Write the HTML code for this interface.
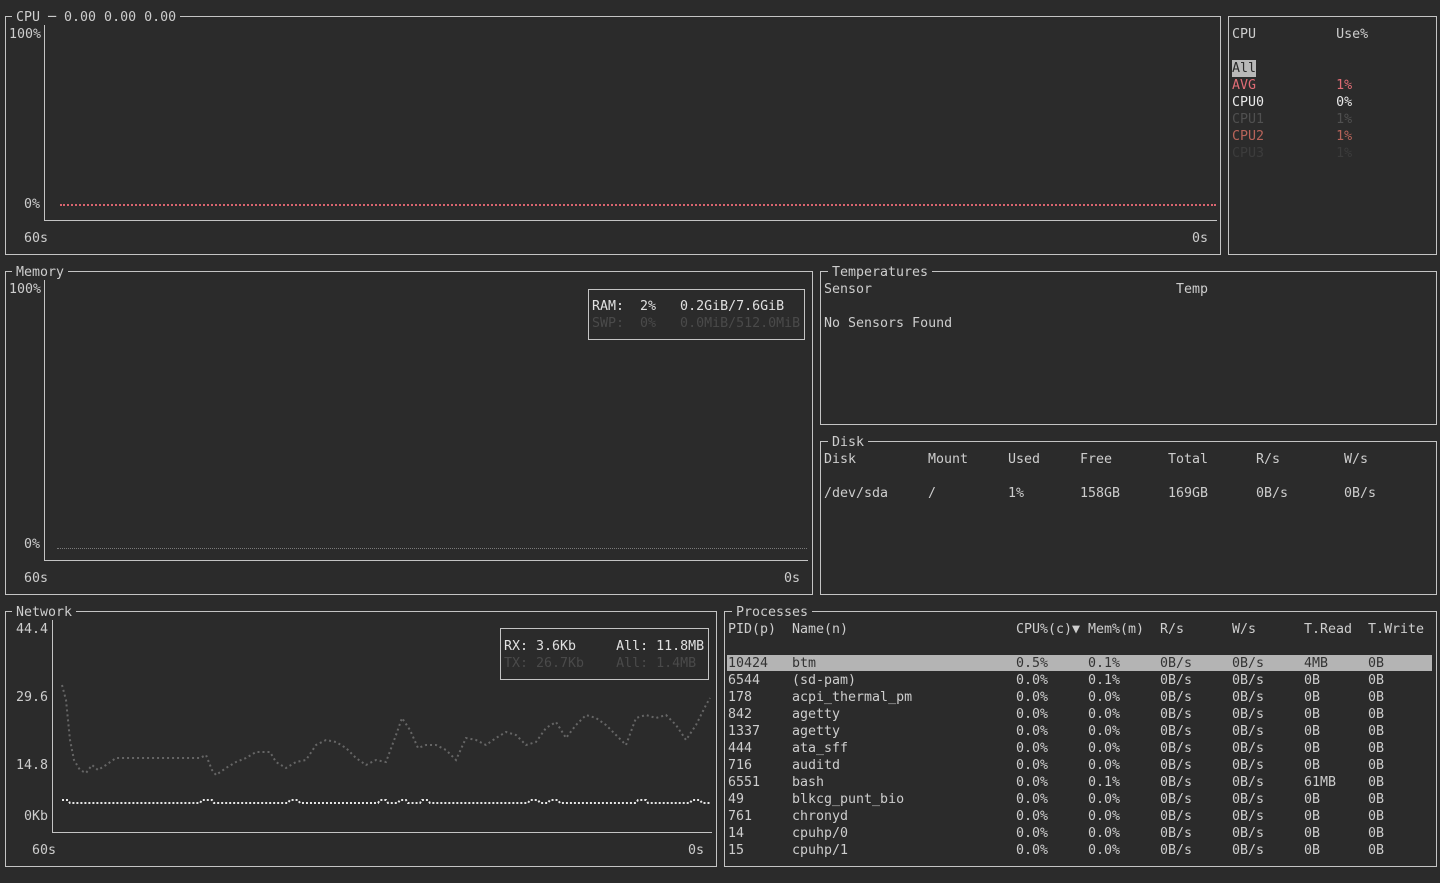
<!DOCTYPE html>
<html><head><meta charset="utf-8"><style>
html,body{margin:0;padding:0;background:#2b2b2b;width:1440px;height:883px;overflow:hidden}
body{position:relative;font-family:"DejaVu Sans Mono","Liberation Mono",monospace;font-size:13.3px;color:#cdcdcd}
.b{position:absolute;border:1px solid #c4c4c4;box-sizing:border-box}
.t{position:absolute;line-height:17px;white-space:pre;margin-top:1px}
.ti{position:absolute;line-height:17px;white-space:pre;background:#2b2b2b;padding:0 4px;margin-top:1px}
.l{position:absolute;background:#c4c4c4}
.r{position:absolute;left:728px;line-height:17px;white-space:pre;height:17px;margin-top:1px}
.r span{display:inline-block}
.r span:nth-child(1){width:64px}.r span:nth-child(2){width:224px}.r span:nth-child(3){width:72px}
.r span:nth-child(4){width:72px}.r span:nth-child(5){width:72px}.r span:nth-child(6){width:72px}.r span:nth-child(7){width:64px}
.d span{display:inline-block}
</style></head><body>

<!-- CPU -->
<div class="b" style="left:5px;top:16px;width:1216px;height:239px"></div>
<div class="ti" style="left:12px;top:8px">CPU ─ 0.00 0.00 0.00</div>
<div class="l" style="left:44px;top:25px;width:1px;height:196px"></div>
<div class="l" style="left:44px;top:220px;width:1173px;height:1px"></div>
<div class="t" style="left:9px;top:25px">100%</div>
<div class="t" style="left:24px;top:195px">0%</div>
<div class="t" style="left:24px;top:229px">60s</div>
<div class="t" style="left:1192px;top:229px">0s</div>
<div style="position:absolute;left:60px;top:204px;width:1156px;height:0;border-top:2px dotted #d9646f"></div>

<div class="b" style="left:1228px;top:16px;width:209px;height:239px"></div>
<div class="t" style="left:1232px;top:25px">CPU          Use%</div>
<div class="t" style="left:1232px;top:59px;background:#b8b8b8;color:#2b2b2b">All</div>
<div class="t" style="left:1232px;top:76px;color:#e06c75">AVG          1%</div>
<div class="t" style="left:1232px;top:93px;color:#e8e8e8">CPU0         0%</div>
<div class="t" style="left:1232px;top:110px;color:#505050">CPU1         1%</div>
<div class="t" style="left:1232px;top:127px;color:#b8645a">CPU2         1%</div>
<div class="t" style="left:1232px;top:144px;color:#3c3c3c">CPU3         1%</div>

<!-- Memory -->
<div class="b" style="left:5px;top:271px;width:808px;height:324px"></div>
<div class="ti" style="left:12px;top:263px">Memory</div>
<div class="l" style="left:44px;top:280px;width:1px;height:281px"></div>
<div class="l" style="left:44px;top:560px;width:764px;height:1px"></div>
<div class="t" style="left:9px;top:280px">100%</div>
<div class="t" style="left:24px;top:535px">0%</div>
<div class="t" style="left:24px;top:569px">60s</div>
<div class="t" style="left:784px;top:569px">0s</div>
<div style="position:absolute;left:57px;top:548px;width:750px;height:0;border-top:1px dotted #7a7a7a"></div>
<div class="b" style="left:588px;top:289px;width:217px;height:51px;background:#2b2b2b"></div>
<div class="t" style="left:592px;top:297px;color:#e0e0e0">RAM:  2%   0.2GiB/7.6GiB</div>
<div class="t" style="left:592px;top:314px;color:#4a4a4a">SWP:  0%   0.0MiB/512.0MiB</div>

<!-- Temperatures -->
<div class="b" style="left:820px;top:271px;width:617px;height:154px"></div>
<div class="ti" style="left:828px;top:263px">Temperatures</div>
<div class="t" style="left:824px;top:280px">Sensor</div>
<div class="t" style="left:1176px;top:280px">Temp</div>
<div class="t" style="left:824px;top:314px">No Sensors Found</div>

<!-- Disk -->
<div class="b" style="left:820px;top:441px;width:617px;height:154px"></div>
<div class="ti" style="left:828px;top:433px">Disk</div>
<div class="t d" style="left:824px;top:450px"><span style="width:104px">Disk</span><span style="width:80px">Mount</span><span style="width:72px">Used</span><span style="width:88px">Free</span><span style="width:88px">Total</span><span style="width:88px">R/s</span><span>W/s</span></div>
<div class="t d" style="left:824px;top:484px"><span style="width:104px">/dev/sda</span><span style="width:80px">/</span><span style="width:72px">1%</span><span style="width:88px">158GB</span><span style="width:88px">169GB</span><span style="width:88px">0B/s</span><span>0B/s</span></div>

<!-- Network -->
<div class="b" style="left:5px;top:611px;width:712px;height:256px"></div>
<div class="ti" style="left:12px;top:603px">Network</div>
<div class="l" style="left:52px;top:620px;width:1px;height:213px"></div>
<div class="l" style="left:52px;top:832px;width:660px;height:1px"></div>
<div class="t" style="left:16px;top:620px">44.4</div>
<div class="t" style="left:16px;top:688px">29.6</div>
<div class="t" style="left:16px;top:756px">14.8</div>
<div class="t" style="left:24px;top:807px">0Kb</div>
<div class="t" style="left:32px;top:841px">60s</div>
<div class="t" style="left:688px;top:841px">0s</div>
<svg style="position:absolute;left:0;top:0" width="1440" height="883">
<polyline fill="none" stroke="#666" stroke-width="2" stroke-dasharray="2 3" points="62,685 66,700 70,740 74,760 80,770 86,773 92,765 98,770 106,765 116,758 200,758 206,755 212,770 216,775 226,768 236,762 246,758 256,752 270,752 276,762 286,768 296,762 306,760 316,745 326,740 336,742 346,748 356,758 366,765 376,760 386,762 396,735 402,718 410,730 418,748 426,745 436,745 446,750 456,760 466,738 476,740 486,745 496,738 506,732 516,735 526,745 536,742 546,728 556,722 566,738 576,725 586,715 596,718 606,725 616,735 626,745 636,718 646,715 656,718 666,715 676,725 686,740 696,725 706,705 710,698"/>
<polyline fill="none" stroke="#e6e6e6" stroke-width="2" stroke-dasharray="2 2" points="62,800 68,800 70,803 200,803 202,800 212,800 214,803 288,803 290,800 298,800 300,803 378,803 380,800 386,800 388,803 398,803 400,800 406,800 408,803 420,803 422,800 428,800 430,803 528,803 530,800 538,800 540,803 548,803 550,800 558,800 560,803 636,803 638,800 646,800 648,803 690,803 692,800 700,800 702,803 710,803"/>
</svg>
<div class="b" style="left:500px;top:628px;width:209px;height:52px;background:#2b2b2b"></div>
<div class="t" style="left:504px;top:637px;color:#e0e0e0">RX: 3.6Kb     All: 11.8MB</div>
<div class="t" style="left:504px;top:654px;color:#4a4a4a">TX: 26.7Kb    All: 1.4MB</div>

<!-- Processes -->
<div class="b" style="left:724px;top:611px;width:713px;height:256px"></div>
<div class="ti" style="left:732px;top:603px">Processes</div>
<div class="r" style="top:620px"><span>PID(p)</span><span>Name(n)</span><span>CPU%(c)▼</span><span>Mem%(m)</span><span>R/s</span><span>W/s</span><span>T.Read</span><span>T.Write</span></div>
<div style="position:absolute;left:727px;top:655px;width:705px;height:16px;background:#b4b4b4"></div>
<div class="r" style="top:654px;color:#333"><span>10424</span><span>btm</span><span>0.5%</span><span>0.1%</span><span>0B/s</span><span>0B/s</span><span>4MB</span><span>0B</span></div>
<div class="r" style="top:671px"><span>6544</span><span>(sd-pam)</span><span>0.0%</span><span>0.1%</span><span>0B/s</span><span>0B/s</span><span>0B</span><span>0B</span></div>
<div class="r" style="top:688px"><span>178</span><span>acpi_thermal_pm</span><span>0.0%</span><span>0.0%</span><span>0B/s</span><span>0B/s</span><span>0B</span><span>0B</span></div>
<div class="r" style="top:705px"><span>842</span><span>agetty</span><span>0.0%</span><span>0.0%</span><span>0B/s</span><span>0B/s</span><span>0B</span><span>0B</span></div>
<div class="r" style="top:722px"><span>1337</span><span>agetty</span><span>0.0%</span><span>0.0%</span><span>0B/s</span><span>0B/s</span><span>0B</span><span>0B</span></div>
<div class="r" style="top:739px"><span>444</span><span>ata_sff</span><span>0.0%</span><span>0.0%</span><span>0B/s</span><span>0B/s</span><span>0B</span><span>0B</span></div>
<div class="r" style="top:756px"><span>716</span><span>auditd</span><span>0.0%</span><span>0.0%</span><span>0B/s</span><span>0B/s</span><span>0B</span><span>0B</span></div>
<div class="r" style="top:773px"><span>6551</span><span>bash</span><span>0.0%</span><span>0.1%</span><span>0B/s</span><span>0B/s</span><span>61MB</span><span>0B</span></div>
<div class="r" style="top:790px"><span>49</span><span>blkcg_punt_bio</span><span>0.0%</span><span>0.0%</span><span>0B/s</span><span>0B/s</span><span>0B</span><span>0B</span></div>
<div class="r" style="top:807px"><span>761</span><span>chronyd</span><span>0.0%</span><span>0.0%</span><span>0B/s</span><span>0B/s</span><span>0B</span><span>0B</span></div>
<div class="r" style="top:824px"><span>14</span><span>cpuhp/0</span><span>0.0%</span><span>0.0%</span><span>0B/s</span><span>0B/s</span><span>0B</span><span>0B</span></div>
<div class="r" style="top:841px"><span>15</span><span>cpuhp/1</span><span>0.0%</span><span>0.0%</span><span>0B/s</span><span>0B/s</span><span>0B</span><span>0B</span></div>
</body></html>
